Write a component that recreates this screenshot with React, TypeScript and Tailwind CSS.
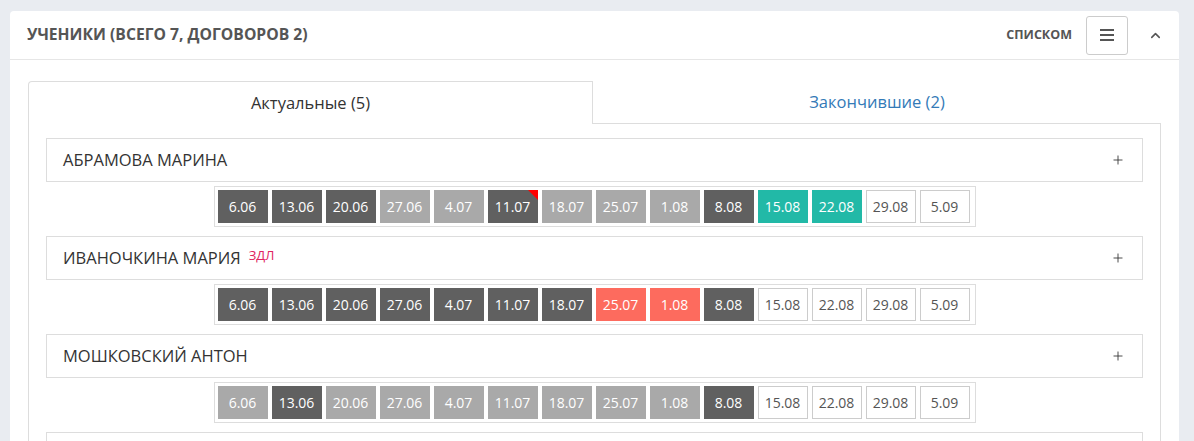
import { ChevronUp, Plus } from 'lucide-react';

type Kind = 'dark' | 'light' | 'teal' | 'red' | 'empty';

interface Lesson {
  date: string;
  kind: Kind;
  flag?: boolean;
}

interface Student {
  name: string;
  note?: string;
  lessons: Lesson[];
}

const DATES = ['6.06', '13.06', '20.06', '27.06', '4.07', '11.07', '18.07', '25.07', '1.08', '8.08', '15.08', '22.08', '29.08', '5.09'];

const mk = (kinds: Kind[], flagAt = -1): Lesson[] =>
  DATES.map((date, i) => ({ date, kind: kinds[i], flag: i === flagAt }));

const STUDENTS: Student[] = [
  {
    name: 'Абрамова Марина',
    lessons: mk(['dark', 'dark', 'dark', 'light', 'light', 'dark', 'light', 'light', 'light', 'dark', 'teal', 'teal', 'empty', 'empty'], 5),
  },
  {
    name: 'Иваночкина Мария',
    note: 'ЗДЛ',
    lessons: mk(['dark', 'dark', 'dark', 'dark', 'dark', 'dark', 'dark', 'red', 'red', 'dark', 'empty', 'empty', 'empty', 'empty']),
  },
  {
    name: 'Мошковский Антон',
    lessons: mk(['light', 'dark', 'light', 'light', 'light', 'light', 'light', 'light', 'light', 'dark', 'empty', 'empty', 'empty', 'empty']),
  },
];

const CELL: Record<Kind, string> = {
  dark: 'bg-[#606060] text-white',
  light: 'bg-[#a9a9a9] text-white',
  teal: 'bg-[#22b9a7] text-white',
  red: 'bg-[#fd6b5e] text-white',
  empty: 'bg-white text-[#555] border border-[#ccc]',
};

function LessonStrip({ lessons }: { lessons: Lesson[] }) {
  return (
    <div className="flex justify-center mt-[4px]">
      <div className="flex gap-[4px] border border-[#ddd] pl-[3px] pr-[5px] py-[3px]">
        {lessons.map((l, i) => (
          <div
            key={i}
            className={`relative w-[50px] h-[33px] flex items-center justify-center text-[14px] ${CELL[l.kind]}`}
          >
            {l.date}
            {l.flag && (
              <div className="absolute top-0 right-0 w-0 h-0 border-t-[10px] border-l-[10px] border-t-[#f00] border-l-transparent" />
            )}
          </div>
        ))}
      </div>
    </div>
  );
}

function StudentRow({ s }: { s: Student }) {
  return (
    <div className="mb-[9px]">
      <div className="h-[44px] border border-[#ddd] flex items-center pl-[16px] pr-[17px]">
        <span className="text-[16.5px] text-[#333] uppercase">{s.name}</span>
        {s.note && <span className="ml-[8px] -mt-[4px] text-[13px] text-[#e0245e]">{s.note}</span>}
        <Plus size={14} strokeWidth={1.5} className="ml-auto text-[#333]" />
      </div>
      <LessonStrip lessons={s.lessons} />
    </div>
  );
}

export default function App() {
  return (
    <div className="w-[1194px] h-[441px] overflow-hidden bg-[#e9ecf1] pl-[10px] pr-[15px] pt-[11px] font-['Open_Sans',sans-serif]">
      <div className="bg-white rounded-[4px] h-[460px]">
        {/* Panel header */}
        <div className="h-[49px] border-b border-[#e6e6e6] flex items-center pl-[17px] pr-[16px]">
          <h2 className="text-[15.7px] font-bold text-[#555] uppercase">Ученики (всего 7, договоров 2)</h2>
          <span className="ml-auto text-[12.5px] font-bold text-[#555] uppercase">Списком</span>
          <button className="ml-[14px] w-[42px] h-[39px] border border-[#ccc] rounded-[3px] flex items-center justify-center">
            <svg width="14" height="12" viewBox="0 0 14 12">
              <rect x="0" y="0" width="14" height="2" fill="#555" />
              <rect x="0" y="5" width="14" height="2" fill="#555" />
              <rect x="0" y="10" width="14" height="2" fill="#555" />
            </svg>
          </button>
          <ChevronUp size={15} strokeWidth={2.5} className="ml-[20px] text-[#555]" />
        </div>

        {/* Tabs */}
        <div className="pt-[21px] pl-[18px] pr-[18px]">
          <div className="flex h-[43px]">
            <div className="w-[565px] border border-b-0 border-[#ddd] rounded-tl-[4px] flex items-center justify-center text-[16.5px] text-[#333]">
              Актуальные (5)
            </div>
            <div className="flex-1 border-b border-[#ddd] flex items-center justify-center text-[16.5px] text-[#337ab7]">
              Закончившие (2)
            </div>
          </div>
          <div className="border-x border-[#ddd] pt-[14px] pl-[17px] pr-[17px]">
            {STUDENTS.map((s, i) => (
              <StudentRow key={i} s={s} />
            ))}
            <div className="h-[44px] border border-[#ddd]" />
          </div>
        </div>
      </div>
    </div>
  );
}
